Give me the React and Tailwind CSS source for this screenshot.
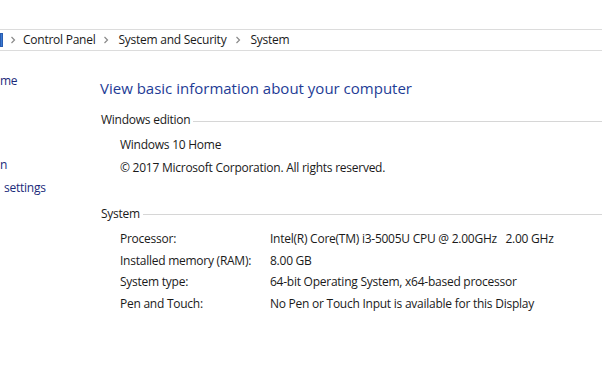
import React from "react";

function Chevron({ cls = "mx-[8px]" }) {
  return (
    <svg width="6" height="8" viewBox="0 0 6 8" className={cls}>
      <path d="M1.5 1 L4.5 4 L1.5 7" stroke="#8a8a8a" strokeWidth="1.2" fill="none" />
    </svg>
  );
}

function Row({ label, value }) {
  return (
    <div className="flex h-[21.7px] items-center">
      <div className="w-[150px]">{label}</div>
      <div className="whitespace-pre">{value}</div>
    </div>
  );
}

export default function App() {
  return (
    <div className="w-[602px] h-[367px] bg-white overflow-hidden text-[12px] text-[#1a1a1a] font-['Open_Sans',sans-serif] tracking-[-0.25px] leading-none">
      <div className="h-[29px]" />
      <div className="h-[22px] border-t border-b border-[#dcdcdc] flex items-center">
        <div className="w-[3px] h-[14px] bg-[#3a7bd5] border border-[#2a5db0]" />
        <Chevron cls="mx-[7px]" />
        <span>Control Panel</span>
        <Chevron cls="ml-[8px] mr-[9px]" />
        <span>System and Security</span>
        <Chevron cls="ml-[9px] mr-[9px]" />
        <span>System</span>
      </div>
      <div className="flex">
        <div className="w-[100px] shrink-0 text-[#1a2a7a]">
          <div className="mt-[23px] h-[14px] leading-[14px]">me</div>
          <div className="mt-[70px] h-[14px] leading-[14px]">n</div>
          <div className="mt-[9px] ml-[4px] h-[14px] leading-[14px]">settings</div>
        </div>
        <div className="flex-1">
          <div className="mt-[28px] text-[15px] tracking-normal text-[#1e3c96] h-[18px] leading-[18px]">View basic information about your computer</div>
          <div className="mt-[16px] flex items-center h-[14px] ml-[1px]">
            <span>Windows edition</span>
            <div className="flex-1 h-px bg-[#d6d6d6] ml-[3px] mt-[3px]" />
          </div>
          <div className="ml-[20px] mt-[7px] h-[22px] flex items-center">Windows 10 Home</div>
          <div className="ml-[20px] mt-[1px] h-[22px] flex items-center">© 2017 Microsoft Corporation. All rights reserved.</div>
          <div className="mt-[28px] flex items-center h-[14px] ml-[1px]">
            <span>System</span>
            <div className="flex-1 h-px bg-[#d6d6d6] ml-[3px] mt-[1px]" />
          </div>
          <div className="ml-[20px] mt-[7px]">
            <Row label="Processor:" value={"Intel(R) Core(TM) i3-5005U CPU @ 2.00GHz   2.00 GHz"} />
            <Row label="Installed memory (RAM):" value="8.00 GB" />
            <Row label="System type:" value="64-bit Operating System, x64-based processor" />
            <Row label="Pen and Touch:" value="No Pen or Touch Input is available for this Display" />
          </div>
        </div>
      </div>
    </div>
  );
}
